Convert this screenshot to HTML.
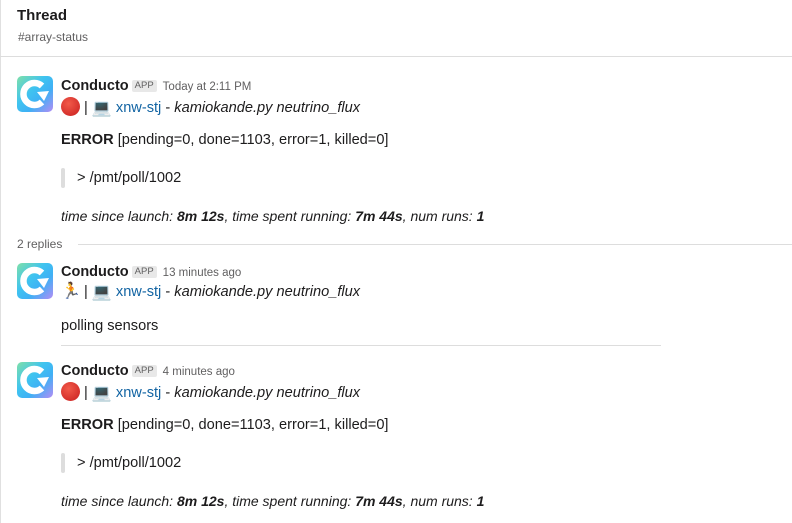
<!DOCTYPE html>
<html><head><meta charset="utf-8"><style>
*{margin:0;padding:0;box-sizing:border-box}
body{width:792px;height:523px;background:#fff;font-family:"Liberation Sans",sans-serif;color:#1d1c1d;position:relative;overflow:hidden}
.lb{position:absolute;left:0;top:0;width:1px;height:523px;background:#e0e0e0}
.a{position:absolute;white-space:nowrap;font-size:14px;line-height:18px}
.w{font-size:14.6px}
.av{position:absolute;left:17px;width:36px;height:36px;border-radius:5px;background:linear-gradient(135deg,#7fe0a8 0%,#3fc3f0 40%,#3fb0f5 65%,#b48cf5 100%)}
.nm{font-weight:bold;font-size:14.5px}
.app{display:inline-block;background:#e8e8e8;color:#616061;font-size:9.5px;line-height:12px;padding:0 3px;border-radius:2px;vertical-align:2px;margin-left:3px;font-weight:normal}
.tm{color:#616061;font-size:11.5px;margin-left:6px;font-weight:normal}
.lk{color:#1264a3}
.bar{position:absolute;left:61px;width:4px;height:20px;background:#ddd;border-radius:2px}
.dot{display:inline-block;width:19px;height:19px;border-radius:50%;background:radial-gradient(circle at 40% 35%,#f25a4a,#c81e1e);vertical-align:-4px}
.lap{display:inline-block;font-size:16px;color:#555;vertical-align:-1px}
</style></head><body>
<div class="lb"></div>
<div class="a" style="left:17px;top:7px;font-weight:bold;font-size:15px">Thread</div>
<div class="a" style="left:18px;top:28px;font-size:12px;color:#616061">#array-status</div>
<div style="position:absolute;left:0;top:56px;width:792px;height:1px;background:#ddd"></div>

<!-- msg1 -->
<div class="av" style="top:76px"><svg width="36" height="36" viewBox="0 0 36 36"><path d="M25 10 A11 11 0 1 0 25 26" fill="none" stroke="#fff" stroke-width="6.5"/><path d="M20 16 L32 15 L27 25 Z" fill="#fff"/></svg></div>
<div class="a" style="left:61px;top:76px"><span class="nm">Conducto</span><span class="app">APP</span><span class="tm">Today at 2:11 PM</span></div>
<div class="a w" style="left:61px;top:97px"><span class="dot"></span> | <span class="lap">💻</span> <span class="lk">xnw-stj</span> - <i>kamiokande.py neutrino_flux</i></div>
<div class="a w" style="left:61px;top:131px"><b>ERROR</b> [pending=0, done=1103, error=1, killed=0]</div>
<div class="bar" style="top:168px"></div>
<div class="a w" style="left:77px;top:169px">&gt; /pmt/poll/1002</div>
<div class="a" style="left:61px;top:207px"><i>time since launch: <b>8m 12s</b>, time spent running: <b>7m 44s</b>, num runs: <b>1</b></i></div>

<div class="a" style="left:17px;top:235px;font-size:12px;color:#616061">2 replies</div>
<div style="position:absolute;left:78px;top:244px;width:714px;height:1px;background:#ddd"></div>

<!-- msg2 -->
<div class="av" style="top:263px"><svg width="36" height="36" viewBox="0 0 36 36"><path d="M25 10 A11 11 0 1 0 25 26" fill="none" stroke="#fff" stroke-width="6.5"/><path d="M20 16 L32 15 L27 25 Z" fill="#fff"/></svg></div>
<div class="a" style="left:61px;top:262px"><span class="nm">Conducto</span><span class="app">APP</span><span class="tm">13 minutes ago</span></div>
<div class="a w" style="left:61px;top:283px"><span style="display:inline-block;width:19px;font-size:16px;color:#f0a030">🏃</span> | <span class="lap">💻</span> <span class="lk">xnw-stj</span> - <i>kamiokande.py neutrino_flux</i></div>
<div class="a w" style="left:61px;top:317px">polling sensors</div>
<div style="position:absolute;left:61px;top:345px;width:600px;height:1px;background:#ddd"></div>

<!-- msg3 -->
<div class="av" style="top:362px"><svg width="36" height="36" viewBox="0 0 36 36"><path d="M25 10 A11 11 0 1 0 25 26" fill="none" stroke="#fff" stroke-width="6.5"/><path d="M20 16 L32 15 L27 25 Z" fill="#fff"/></svg></div>
<div class="a" style="left:61px;top:361px"><span class="nm">Conducto</span><span class="app">APP</span><span class="tm">4 minutes ago</span></div>
<div class="a w" style="left:61px;top:382px"><span class="dot"></span> | <span class="lap">💻</span> <span class="lk">xnw-stj</span> - <i>kamiokande.py neutrino_flux</i></div>
<div class="a w" style="left:61px;top:416px"><b>ERROR</b> [pending=0, done=1103, error=1, killed=0]</div>
<div class="bar" style="top:453px"></div>
<div class="a w" style="left:77px;top:454px">&gt; /pmt/poll/1002</div>
<div class="a" style="left:61px;top:492px"><i>time since launch: <b>8m 12s</b>, time spent running: <b>7m 44s</b>, num runs: <b>1</b></i></div>
</body></html>
